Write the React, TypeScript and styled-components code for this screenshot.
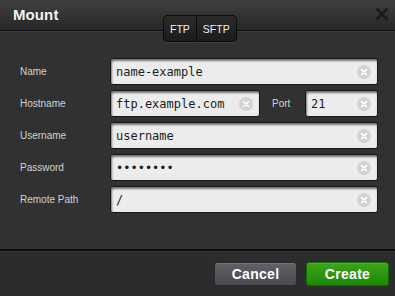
import React from "react";
import styled, { createGlobalStyle } from "styled-components";

const GlobalStyle = createGlobalStyle`
  html, body {
    margin: 0;
    padding: 0;
    background: #1a1a1a;
  }
  * {
    box-sizing: border-box;
  }
`;

const Dialog = styled.div`
  position: relative;
  width: 395px;
  height: 296px;
  display: flex;
  flex-direction: column;
  background: #313131;
  font-family: "Liberation Sans", Arial, sans-serif;
  overflow: hidden;
`;

const Header = styled.header`
  height: 31px;
  flex: none;
  display: flex;
  align-items: center;
  justify-content: space-between;
  padding: 0 5px 2px 13px;
  background: linear-gradient(#404040, #272727);
  border-bottom: 1px solid #0f0f0f;
  box-shadow: 0 1px 0 #3a3a3a;
`;

const Title = styled.h1`
  margin: 0;
  font-size: 15px;
  font-weight: bold;
  color: #f2f2f2;
  letter-spacing: 0.1px;
`;

const CloseButton = styled.button`
  width: 16px;
  height: 16px;
  padding: 0;
  border: 0;
  background: none;
  display: flex;
  align-items: center;
  justify-content: center;
  cursor: pointer;
`;

const TabSwitch = styled.div`
  position: absolute;
  left: 163px;
  top: 15px;
  height: 27px;
  display: flex;
  border: 1px solid #0c0c0c;
  border-radius: 4px;
  background: linear-gradient(#2b2b2b, #1c1c1c);
  box-shadow: 0 1px 0 rgba(255, 255, 255, 0.06);
  overflow: hidden;
`;

const Tab = styled.button<{ $divider?: boolean }>`
  height: 100%;
  padding: 0 6px;
  border: 0;
  border-left: ${p => (p.$divider ? "1px solid #0c0c0c" : "0")};
  background: transparent;
  color: #f0f0f0;
  font-family: "Liberation Sans", Arial, sans-serif;
  font-size: 10.5px;
  cursor: pointer;
`;

const Body = styled.div`
  flex: 1;
  display: grid;
  grid-template-columns: 90px minmax(0, 1fr);
  grid-auto-rows: 27px;
  row-gap: 5px;
  align-content: start;
  padding: 27px 17px 0 20px;
`;

const Label = styled.label<{ $inline?: boolean }>`
  display: flex;
  align-items: center;
  font-size: 10px;
  color: #d2d2d2;
  margin-left: ${p => (p.$inline ? "12px" : "0")};
  width: ${p => (p.$inline ? "33px" : "auto")};
  flex: none;
`;

const Inline = styled.div`
  display: flex;
  align-items: stretch;
  min-width: 0;
`;

const Field = styled.div<{ $width?: number }>`
  display: flex;
  align-items: center;
  min-width: 0;
  height: 27px;
  width: ${p => (p.$width ? `${p.$width}px` : "auto")};
  flex: ${p => (p.$width ? "none" : "1")};
  background: #ececec;
  border: 1px solid #151515;
  border-radius: 3px;
  box-shadow: inset 1px 2px 2px rgba(0, 0, 0, 0.5);
  padding: 0 6px 0 5px;
`;

const Input = styled.input`
  flex: 1;
  width: 100%;
  min-width: 0;
  border: 0;
  outline: none;
  background: transparent;
  padding: 1px 0 0 0;
  font-family: "DejaVu Sans Mono", "Liberation Mono", monospace;
  font-size: 12px;
  color: #1c1c1c;
`;

const ClearIcon = styled.span`
  width: 14px;
  height: 14px;
  flex: none;
  border-radius: 50%;
  background: #d2d2d2;
  display: flex;
  align-items: center;
  justify-content: center;
`;

const Footer = styled.footer`
  height: 47px;
  flex: none;
  display: flex;
  justify-content: flex-end;
  align-items: flex-start;
  gap: 9px;
  padding: 11px 6px 0 0;
  background: #2c2c2c;
  border-top: 2px solid #111111;
  box-shadow: inset 0 1px 0 #363636;
`;

const ActionButton = styled.button<{ $primary?: boolean }>`
  width: 83px;
  height: 24px;
  border: 1px solid ${p => (p.$primary ? "#136b00" : "#2a2a2e")};
  border-radius: 3px;
  background: ${p =>
    p.$primary
      ? "linear-gradient(#3fa21c, #1b8a00)"
      : "linear-gradient(#606066, #4a4a50)"};
  box-shadow: inset 0 1px 0 rgba(255, 255, 255, 0.12);
  color: #ffffff;
  font-family: "Liberation Sans", Arial, sans-serif;
  font-size: 14px;
  font-weight: bold;
  letter-spacing: 0.3px;
  cursor: pointer;
`;

const Clear = () => (
  <ClearIcon>
    <svg width="8" height="8" viewBox="0 0 8 8">
      <path d="M1.5 1.5 L6.5 6.5 M6.5 1.5 L1.5 6.5" stroke="#fff" strokeWidth="1.6" strokeLinecap="round" />
    </svg>
  </ClearIcon>
);

type TextFieldProps = {
  value: string;
  type?: string;
  width?: number;
};

const TextField: React.FC<TextFieldProps> = ({ value, type = "text", width }) => (
  <Field $width={width}>
    <Input type={type} defaultValue={value} readOnly />
    <Clear />
  </Field>
);

export default function App() {
  return (
    <>
      <GlobalStyle />
      <Dialog>
        <Header>
          <Title>Mount</Title>
          <CloseButton aria-label="Close">
            <svg width="14" height="14" viewBox="0 0 14 14">
              <path d="M1.5 1.5 L12.5 12.5 M12.5 1.5 L1.5 12.5" stroke="#1a1a1a" strokeWidth="2.6" />
            </svg>
          </CloseButton>
        </Header>
        <TabSwitch>
          <Tab>FTP</Tab>
          <Tab $divider>SFTP</Tab>
        </TabSwitch>
        <Body>
          <Label>Name</Label>
          <TextField value="name-example" />

          <Label>Hostname</Label>
          <Inline>
            <TextField value="ftp.example.com" width={150} />
            <Label $inline>Port</Label>
            <TextField value="21" />
          </Inline>

          <Label>Username</Label>
          <TextField value="username" />

          <Label>Password</Label>
          <TextField value="password" type="password" />

          <Label>Remote Path</Label>
          <TextField value="/" />
        </Body>
        <Footer>
          <ActionButton>Cancel</ActionButton>
          <ActionButton $primary>Create</ActionButton>
        </Footer>
      </Dialog>
    </>
  );
}
